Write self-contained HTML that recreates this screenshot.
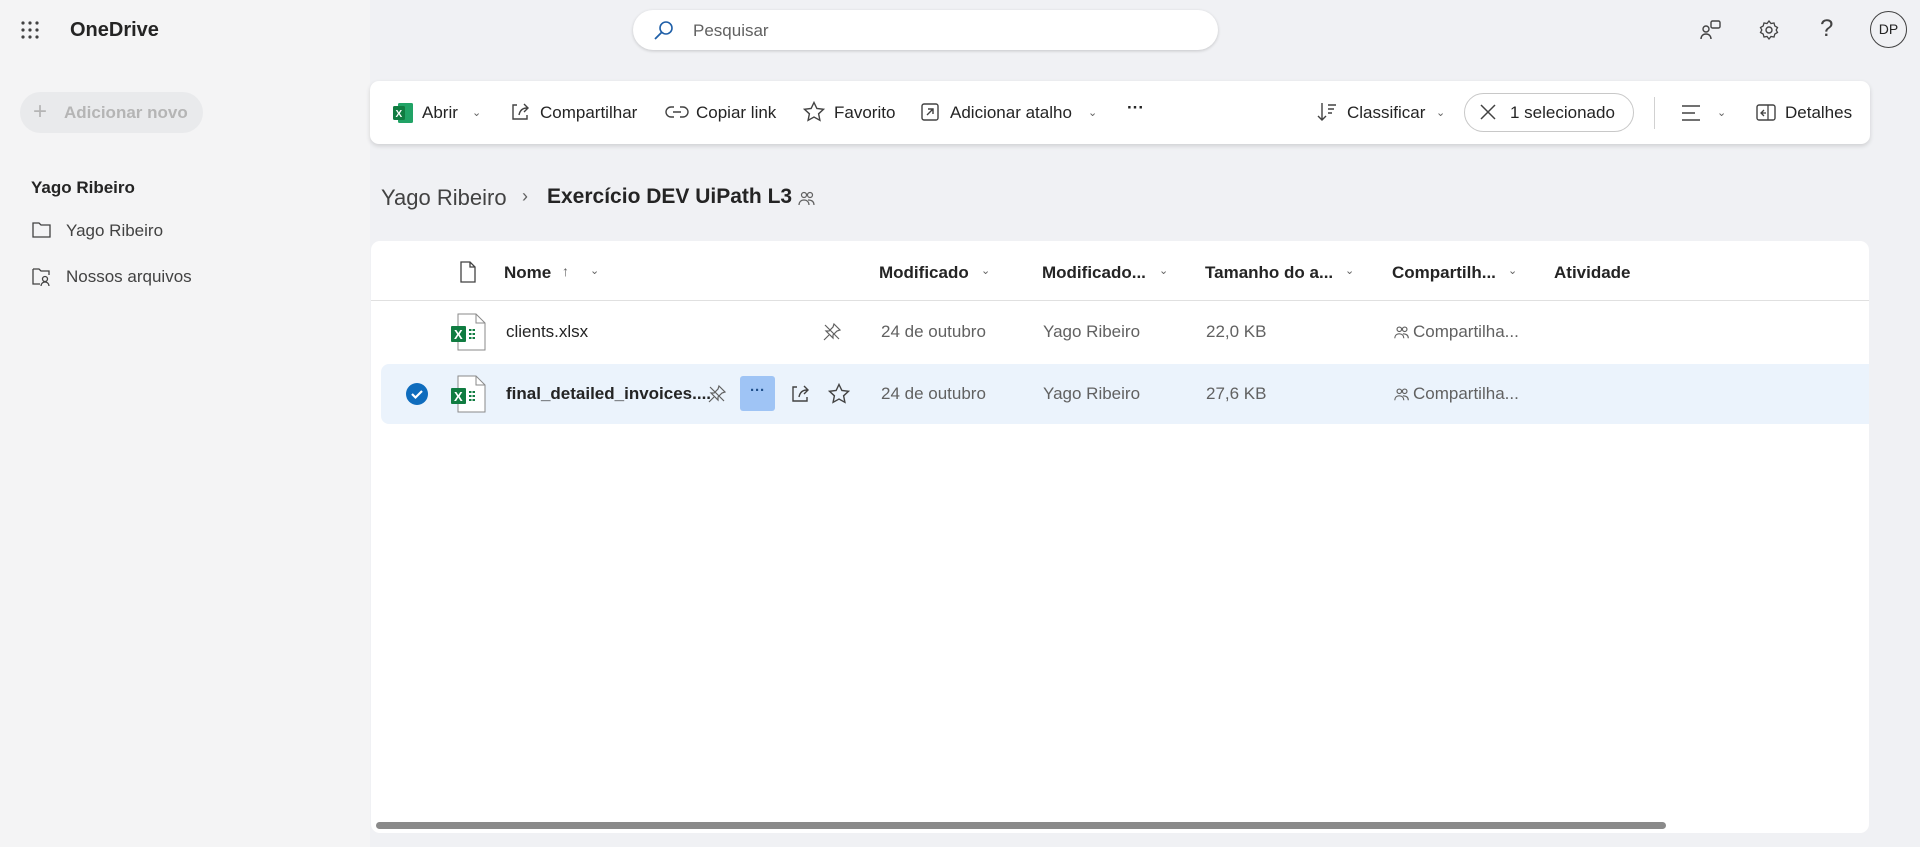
<!DOCTYPE html>
<html><head><meta charset="utf-8">
<style>
*{box-sizing:border-box;margin:0;padding:0}
body{width:1920px;height:847px;overflow:hidden;background:#f0f1f4;font-family:"Liberation Sans",sans-serif;color:#242424;position:relative}
.side{position:absolute;left:0;top:0;width:370px;height:847px;background:#f4f4f5}
.abs{position:absolute;white-space:nowrap}
svg{display:block}
.tb{font-size:17px;color:#242424}
.hd{font-size:17px;font-weight:bold;color:#242424}
.cell{font-size:17px;color:#616161}
.chev{font-size:11px;color:#616161}
</style></head><body>
<div class="side"></div>
<svg class="abs" style="left:20px;top:20px" width="20" height="20" viewBox="0 0 20 20" fill="#424242">
<circle cx="3" cy="3" r="1.6"/><circle cx="10" cy="3" r="1.6"/><circle cx="17" cy="3" r="1.6"/>
<circle cx="3" cy="10" r="1.6"/><circle cx="10" cy="10" r="1.6"/><circle cx="17" cy="10" r="1.6"/>
<circle cx="3" cy="17" r="1.6"/><circle cx="10" cy="17" r="1.6"/><circle cx="17" cy="17" r="1.6"/></svg>
<div class="abs" style="left:70px;top:19px;font-size:20px;font-weight:bold;color:#242424">OneDrive</div>
<div class="abs" style="left:633px;top:10px;width:585px;height:40px;background:#fff;border-radius:20px;box-shadow:0 1px 3px rgba(0,0,0,.18)"></div>
<svg class="abs" style="left:652px;top:19px" width="24" height="24" viewBox="0 0 24 24"><circle cx="14" cy="9" r="6" fill="none" stroke="#1f5fa8" stroke-width="1.6"/><path d="M9.5 13.5L3 20" stroke="#1f5fa8" stroke-width="1.8"/></svg>
<div class="abs" style="left:693px;top:21px;font-size:17px;color:#616161">Pesquisar</div>
<svg class="abs" style="left:1699px;top:18px" width="24" height="24" viewBox="0 0 24 24"><circle cx="7" cy="11" r="3" fill="none" stroke="#424242" stroke-width="1.4"/><path d="M2 21c0-3 2-5 5-5s5 2 5 5" fill="none" stroke="#424242" stroke-width="1.4"/><rect x="12" y="3" width="9" height="7" rx="1.5" fill="none" stroke="#424242" stroke-width="1.4"/></svg>
<svg class="abs" style="left:1757px;top:18px" width="24" height="24" viewBox="0 0 24 24"><circle cx="12" cy="12" r="3" fill="none" stroke="#424242" stroke-width="1.4"/><path d="M12 3l2 2.5 3-.5.8 3 2.7 1.5-1.3 2.5 1.3 2.5-2.7 1.5-.8 3-3-.5-2 2.5-2-2.5-3 .5-.8-3L3.5 14.5 4.8 12 3.5 9.5 6.2 8 7 5l3 .5z" fill="none" stroke="#424242" stroke-width="1.3"/></svg>
<div class="abs" style="left:1820px;top:15px;font-size:24px;color:#424242">?</div>
<div class="abs" style="left:1870px;top:11px;width:37px;height:37px;border:1.3px solid #424242;border-radius:50%;font-size:14px;text-align:center;line-height:35px;color:#242424">DP</div>
<div class="abs" style="left:20px;top:92px;width:183px;height:41px;background:#e9eaec;border-radius:21px"></div>
<div class="abs" style="left:33px;top:98px;font-size:24px;color:#b5b5b5">+</div>
<div class="abs" style="left:64px;top:103px;font-size:17px;font-weight:bold;color:#b5b5b5">Adicionar novo</div>
<div class="abs" style="left:31px;top:178px;font-size:17px;font-weight:bold">Yago Ribeiro</div>
<svg class="abs" style="left:31px;top:220px" width="22" height="20" viewBox="0 0 22 20"><path d="M2 3h6l2 2h9v12H2z" fill="none" stroke="#424242" stroke-width="1.3"/></svg>
<div class="abs" style="left:66px;top:221px;font-size:17px;color:#424242">Yago Ribeiro</div>
<svg class="abs" style="left:31px;top:266px" width="22" height="22" viewBox="0 0 22 22"><path d="M2 3h6l2 2h8v4M9 18H2V3" fill="none" stroke="#424242" stroke-width="1.3"/><circle cx="14" cy="13" r="2.5" fill="none" stroke="#424242" stroke-width="1.3"/><path d="M10 20c0-2.5 2-4 4-4s4 1.5 4 4" fill="none" stroke="#424242" stroke-width="1.3"/></svg>
<div class="abs" style="left:66px;top:267px;font-size:17px;color:#424242">Nossos arquivos</div>
<div class="abs" style="left:370px;top:81px;width:1500px;height:63px;background:#fff;border-radius:9px;box-shadow:0 2px 5px rgba(0,0,0,.14)"></div>
<svg class="abs" style="left:392px;top:102px" width="22" height="22" viewBox="0 0 22 22"><rect x="6" y="1" width="15" height="20" rx="1.5" fill="#21a366"/><rect x="1" y="4" width="12" height="14" rx="1.5" fill="#107c41"/><text x="3.5" y="15" font-size="10" fill="#fff" font-family="Liberation Sans" font-weight="bold">X</text></svg>
<div class="abs tb" style="left:422px;top:103px">Abrir</div><div class="abs chev" style="left:472px;top:106px">⌄</div>
<svg class="abs" style="left:509px;top:101px" width="22" height="22" viewBox="0 0 22 22"><path d="M8 4H4v14h14v-4M10 14c1-5 4-7 8-7M15 3l4 4-4 4" fill="none" stroke="#424242" stroke-width="1.4"/></svg>
<div class="abs tb" style="left:540px;top:103px">Compartilhar</div>
<svg class="abs" style="left:665px;top:101px" width="24" height="22" viewBox="0 0 24 22"><path d="M9 6H6a5 5 0 000 10h3M15 6h3a5 5 0 010 10h-3M8 11h8" fill="none" stroke="#424242" stroke-width="1.4"/></svg>
<div class="abs tb" style="left:696px;top:103px">Copiar link</div>
<svg class="abs" style="left:802px;top:100px" width="24" height="24" viewBox="0 0 24 24"><path d="M12 2.5l2.9 6 6.6.8-4.9 4.5 1.3 6.5L12 17l-5.9 3.3 1.3-6.5-4.9-4.5 6.6-.8z" fill="none" stroke="#424242" stroke-width="1.4"/></svg>
<div class="abs tb" style="left:834px;top:103px">Favorito</div>
<svg class="abs" style="left:919px;top:101px" width="22" height="22" viewBox="0 0 22 22"><rect x="3" y="3" width="16" height="16" rx="2" fill="none" stroke="#424242" stroke-width="1.4"/><path d="M8 14l6-6M9 8h5v5" fill="none" stroke="#424242" stroke-width="1.4"/></svg>
<div class="abs tb" style="left:950px;top:103px">Adicionar atalho</div><div class="abs chev" style="left:1088px;top:106px">⌄</div>
<div class="abs tb" style="left:1127px;top:98px;font-weight:bold">···</div>
<svg class="abs" style="left:1316px;top:101px" width="22" height="22" viewBox="0 0 22 22"><path d="M6 2v17M2 15l4 4 4-4M12 4h8M12 8h6M12 12h4" fill="none" stroke="#424242" stroke-width="1.4"/></svg>
<div class="abs tb" style="left:1347px;top:103px">Classificar</div><div class="abs chev" style="left:1436px;top:106px">⌄</div>
<div class="abs" style="left:1464px;top:93px;width:170px;height:39px;border:1px solid #c8c8c8;border-radius:20px"></div>
<svg class="abs" style="left:1479px;top:103px" width="18" height="18" viewBox="0 0 18 18"><path d="M2 2l14 14M16 2L2 16" stroke="#424242" stroke-width="1.5"/></svg>
<div class="abs tb" style="left:1510px;top:103px">1 selecionado</div>
<div class="abs" style="left:1654px;top:97px;width:1px;height:32px;background:#d1d1d1"></div>
<svg class="abs" style="left:1680px;top:102px" width="22" height="22" viewBox="0 0 22 22"><path d="M2 4h18M2 11h13M2 18h18" stroke="#424242" stroke-width="1.4"/></svg>
<div class="abs chev" style="left:1717px;top:106px">⌄</div>
<svg class="abs" style="left:1755px;top:102px" width="22" height="22" viewBox="0 0 22 22"><rect x="2" y="3" width="18" height="15" rx="2" fill="none" stroke="#424242" stroke-width="1.4"/><path d="M13 3v15M9 8l-3 3 3 3M6 11h5" fill="none" stroke="#424242" stroke-width="1.3"/></svg>
<div class="abs tb" style="left:1785px;top:103px">Detalhes</div>
<div class="abs" style="left:381px;top:185px;font-size:22px;color:#424242">Yago Ribeiro</div>
<div class="abs" style="left:522px;top:186px;font-size:18px;color:#616161">›</div>
<div class="abs" style="left:547px;top:185px;font-size:21px;font-weight:bold">Exercício DEV UiPath L3</div>
<svg class="abs" style="left:797px;top:188px" width="20" height="20" viewBox="0 0 20 20"><circle cx="7" cy="7" r="2.5" fill="none" stroke="#616161" stroke-width="1.2"/><circle cx="13" cy="7" r="2.5" fill="none" stroke="#616161" stroke-width="1.2"/><path d="M2 17c0-3 2-5 5-5s5 2 5 5M11 12c3 0 6 1 6 5" fill="none" stroke="#616161" stroke-width="1.2"/></svg>
<div class="abs" style="left:371px;top:241px;width:1498px;height:592px;background:#fff;border-radius:9px"></div>
<div class="abs" style="left:371px;top:300px;width:1498px;height:1px;background:#e0e0e0"></div>
<svg class="abs" style="left:458px;top:260px" width="20" height="24" viewBox="0 0 20 24"><path d="M3 2h9l5 5v15H3zM12 2v5h5" fill="none" stroke="#424242" stroke-width="1.3"/></svg>
<div class="abs hd" style="left:504px;top:263px">Nome</div><div class="abs" style="left:562px;top:263px;font-size:14px;color:#616161">↑</div><div class="abs chev" style="left:590px;top:264px">⌄</div>
<div class="abs hd" style="left:879px;top:263px">Modificado</div><div class="abs chev" style="left:981px;top:264px">⌄</div>
<div class="abs hd" style="left:1042px;top:263px">Modificado...</div><div class="abs chev" style="left:1159px;top:264px">⌄</div>
<div class="abs hd" style="left:1205px;top:263px">Tamanho do a...</div><div class="abs chev" style="left:1345px;top:264px">⌄</div>
<div class="abs hd" style="left:1392px;top:263px">Compartilh...</div><div class="abs chev" style="left:1508px;top:264px">⌄</div>
<div class="abs hd" style="left:1554px;top:263px">Atividade</div>
<div class="abs" style="left:381px;top:364px;width:1488px;height:60px;background:#ebf3fc;border-radius:8px 0 0 8px"></div>
<svg class="abs" style="left:405px;top:382px" width="24" height="24" viewBox="0 0 24 24"><circle cx="12" cy="12" r="11" fill="#0f6cbd"/><path d="M7 12l3.5 3.5L17 9" fill="none" stroke="#fff" stroke-width="2.2"/></svg>
<svg class="abs" style="left:450px;top:313px" width="38" height="38" viewBox="0 0 38 38"><path d="M8 1h18l9 9v27H8z" fill="#fff" stroke="#8a8a8a" stroke-width="1"/><path d="M26 1v9h9" fill="none" stroke="#8a8a8a"/><rect x="1" y="13" width="15" height="16" rx="1" fill="#107c41"/><text x="4" y="26" font-size="13" fill="#fff" font-family="Liberation Sans" font-weight="bold">X</text><path d="M19 17h6M19 21h6M19 25h6" stroke="#107c41" stroke-width="2" stroke-dasharray="2.5 1"/></svg>
<svg class="abs" style="left:450px;top:375px" width="38" height="38" viewBox="0 0 38 38"><path d="M8 1h18l9 9v27H8z" fill="#fff" stroke="#8a8a8a" stroke-width="1"/><path d="M26 1v9h9" fill="none" stroke="#8a8a8a"/><rect x="1" y="13" width="15" height="16" rx="1" fill="#107c41"/><text x="4" y="26" font-size="13" fill="#fff" font-family="Liberation Sans" font-weight="bold">X</text><path d="M19 17h6M19 21h6M19 25h6" stroke="#107c41" stroke-width="2" stroke-dasharray="2.5 1"/></svg>
<div class="abs" style="left:506px;top:322px;font-size:17px;color:#242424">clients.xlsx</div>
<div class="abs" style="left:506px;top:384px;font-size:17px;font-weight:bold;color:#242424">final_detailed_invoices....</div>
<svg class="abs" style="left:822px;top:322px" width="20" height="20" viewBox="0 0 20 20"><path d="M2 18l5-5M12 2l6 6-3 1-4 4 0 3-7-7 3 0 4-4zM3 3l14 14" fill="none" stroke="#616161" stroke-width="1.2"/></svg>
<svg class="abs" style="left:707px;top:384px" width="20" height="20" viewBox="0 0 20 20"><path d="M2 18l5-5M12 2l6 6-3 1-4 4 0 3-7-7 3 0 4-4zM3 3l14 14" fill="none" stroke="#616161" stroke-width="1.2"/></svg>
<div class="abs" style="left:740px;top:376px;width:35px;height:35px;background:#9fc4f5;border-radius:3px;text-align:center;font-size:15px;line-height:30px;color:#1f4f8a;font-weight:bold">···</div>
<svg class="abs" style="left:789px;top:383px" width="22" height="22" viewBox="0 0 22 22"><path d="M8 4H4v14h14v-4M10 14c1-5 4-7 8-7M15 3l4 4-4 4" fill="none" stroke="#424242" stroke-width="1.4"/></svg>
<svg class="abs" style="left:827px;top:382px" width="24" height="24" viewBox="0 0 24 24"><path d="M12 2.5l2.9 6 6.6.8-4.9 4.5 1.3 6.5L12 17l-5.9 3.3 1.3-6.5-4.9-4.5 6.6-.8z" fill="none" stroke="#424242" stroke-width="1.4"/></svg>
<div class="abs cell" style="left:881px;top:322px">24 de outubro</div>
<div class="abs cell" style="left:881px;top:384px">24 de outubro</div>
<div class="abs cell" style="left:1043px;top:322px">Yago Ribeiro</div>
<div class="abs cell" style="left:1043px;top:384px">Yago Ribeiro</div>
<div class="abs cell" style="left:1206px;top:322px">22,0 KB</div>
<div class="abs cell" style="left:1206px;top:384px">27,6 KB</div>
<svg class="abs" style="left:1393px;top:323px" width="18" height="18" viewBox="0 0 20 20"><circle cx="7" cy="7" r="2.5" fill="none" stroke="#616161" stroke-width="1.3"/><circle cx="13" cy="7" r="2.5" fill="none" stroke="#616161" stroke-width="1.3"/><path d="M2 17c0-3 2-5 5-5s5 2 5 5M11 12c3 0 6 1 6 5" fill="none" stroke="#616161" stroke-width="1.3"/></svg>
<div class="abs cell" style="left:1413px;top:322px">Compartilha...</div>
<svg class="abs" style="left:1393px;top:385px" width="18" height="18" viewBox="0 0 20 20"><circle cx="7" cy="7" r="2.5" fill="none" stroke="#616161" stroke-width="1.3"/><circle cx="13" cy="7" r="2.5" fill="none" stroke="#616161" stroke-width="1.3"/><path d="M2 17c0-3 2-5 5-5s5 2 5 5M11 12c3 0 6 1 6 5" fill="none" stroke="#616161" stroke-width="1.3"/></svg>
<div class="abs cell" style="left:1413px;top:384px">Compartilha...</div>
<div class="abs" style="left:376px;top:822px;width:1290px;height:7px;background:#8a8a8a;border-radius:4px"></div>
</body></html>
